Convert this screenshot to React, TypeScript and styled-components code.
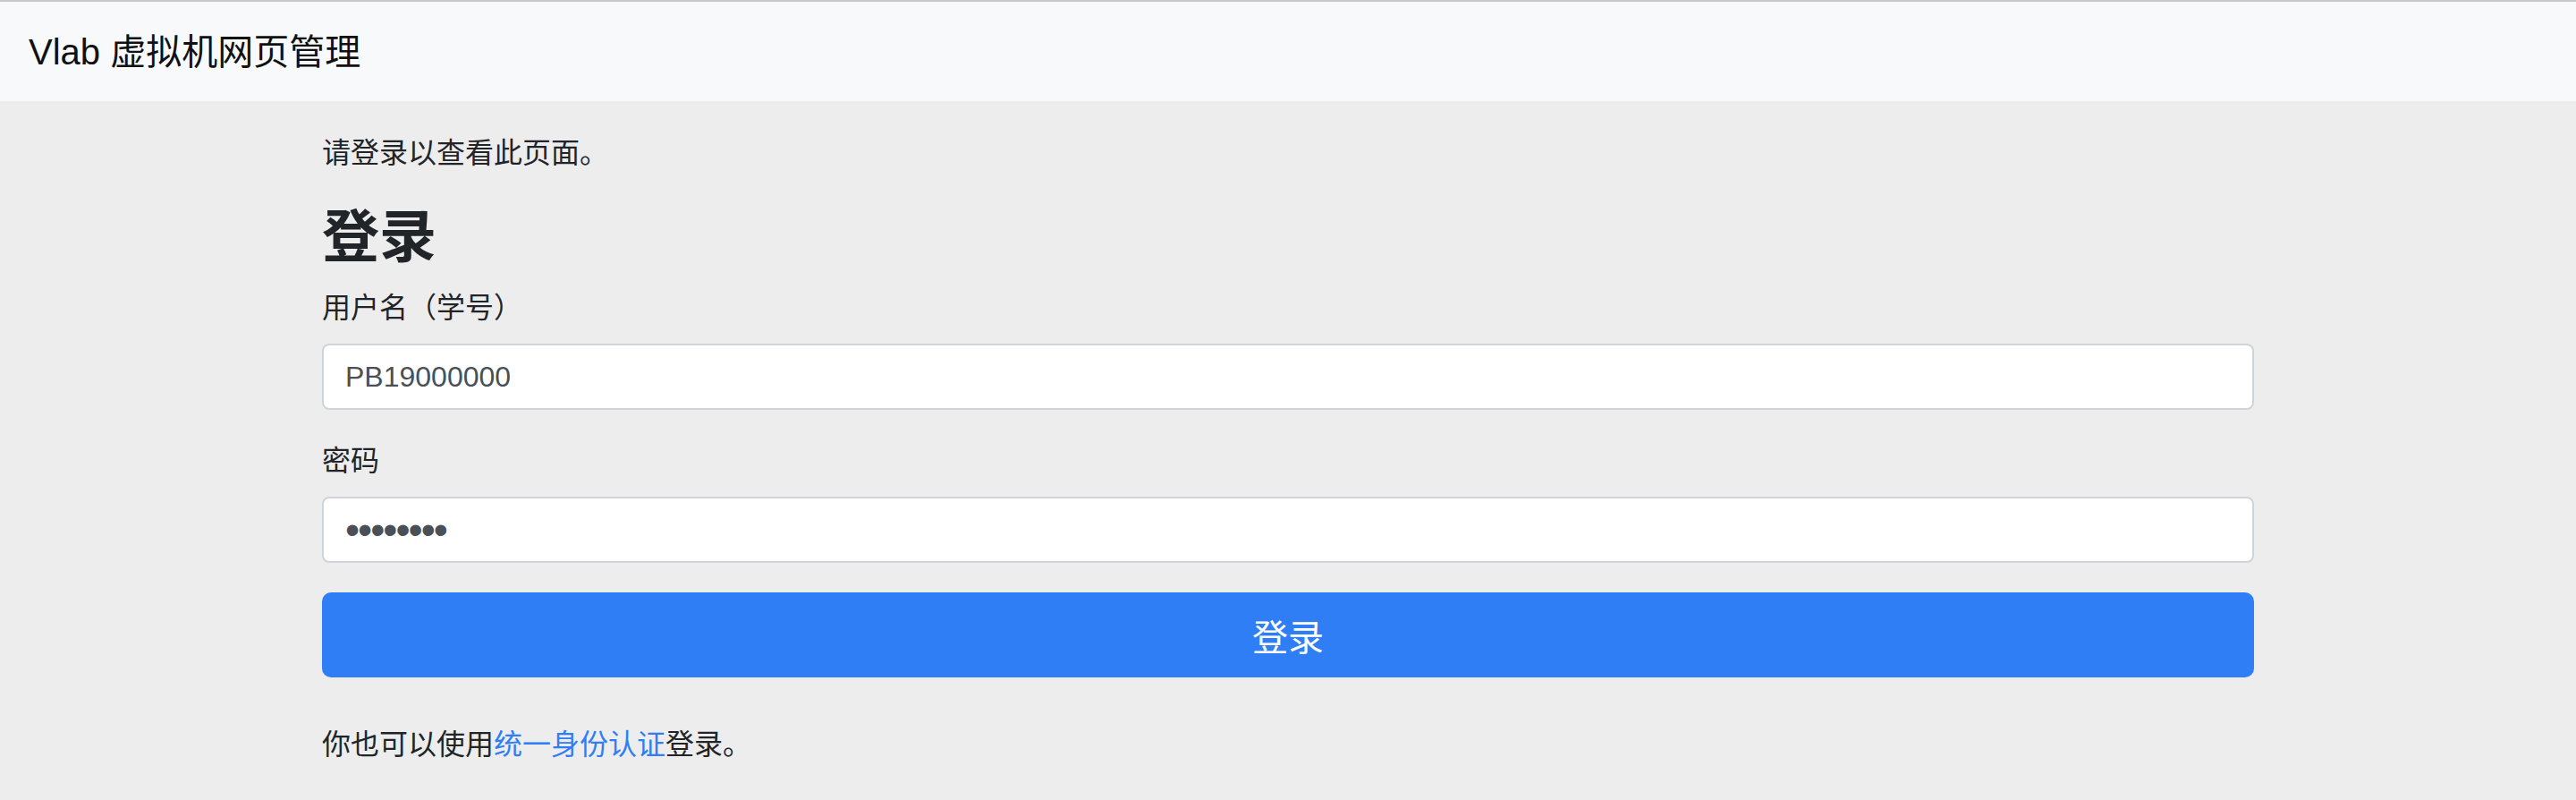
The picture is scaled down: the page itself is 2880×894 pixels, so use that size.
import { FC } from 'react'
import styled, { createGlobalStyle } from 'styled-components'

const GlobalStyle = createGlobalStyle`
  html, body {
    margin: 0;
    padding: 0;
    background: #ededed;
  }
  body {
    font-family: 'Liberation Sans', 'Noto Sans CJK SC', sans-serif;
    font-size: 32px;
    line-height: 48px;
    color: #212529;
  }
  * {
    box-sizing: border-box;
  }
`

const Navbar = styled.nav`
  display: flex;
  align-items: center;
  height: 113px;
  padding: 0 32px;
  border-top: 2px solid #c9c9c9;
  background: #f8f9fa;
`
const Brand = styled.a`
  font-size: 40px;
  line-height: 60px;
  color: #111;
  text-decoration: none;
`
const Container = styled.main`
  width: 2160px;
  margin: 0 auto;
  padding-top: 34px;
`
const Notice = styled.p`
  margin: 0 0 32px;
`
const Title = styled.h2`
  margin: 0 0 16px;
  font-size: 64px;
  line-height: 77px;
  font-weight: 700;
`
const FormGroup = styled.div`
  display: flex;
  flex-direction: column;
  margin-bottom: 33px;
`
const Label = styled.label`
  margin-bottom: 16px;
`
const Input = styled.input<{ masked?: boolean }>`
  height: 74px;
  padding: 0 24px;
  border: 2px solid #ced4da;
  border-radius: 8px;
  background: #fff;
  font-family: 'Liberation Sans', 'Noto Sans CJK SC', sans-serif;
  font-size: ${(props) => (props.masked ? '46px' : '32px')};
  color: #495057;
  letter-spacing: ${(props) => (props.masked ? '-2px' : '0')};
  outline: none;
`
const SubmitButton = styled.button`
  display: block;
  width: 100%;
  height: 95px;
  border: none;
  border-radius: 10px;
  background: #2f7ef5;
  color: #fff;
  font-family: 'Liberation Sans', 'Noto Sans CJK SC', sans-serif;
  font-size: 40px;
  cursor: pointer;
`
const Footnote = styled.p`
  margin: 51px 0 0;
`
const Link = styled.a`
  color: #2f7ef5;
  text-decoration: none;
`

const App: FC = () => {
  return (
    <>
      <GlobalStyle />
      <Navbar>
        <Brand href='#'>Vlab 虚拟机网页管理</Brand>
      </Navbar>
      <Container>
        <Notice>请登录以查看此页面。</Notice>
        <Title>登录</Title>
        <form onSubmit={(e) => e.preventDefault()}>
          <FormGroup>
            <Label htmlFor='username'>用户名（学号）</Label>
            <Input id='username' type='text' defaultValue='PB19000000' />
          </FormGroup>
          <FormGroup>
            <Label htmlFor='password'>密码</Label>
            <Input id='password' type='password' defaultValue='12345678' masked />
          </FormGroup>
          <SubmitButton type='submit'>登录</SubmitButton>
        </form>
        <Footnote>
          你也可以使用<Link href='#'>统一身份认证</Link>登录。
        </Footnote>
      </Container>
    </>
  )
}
export default App
